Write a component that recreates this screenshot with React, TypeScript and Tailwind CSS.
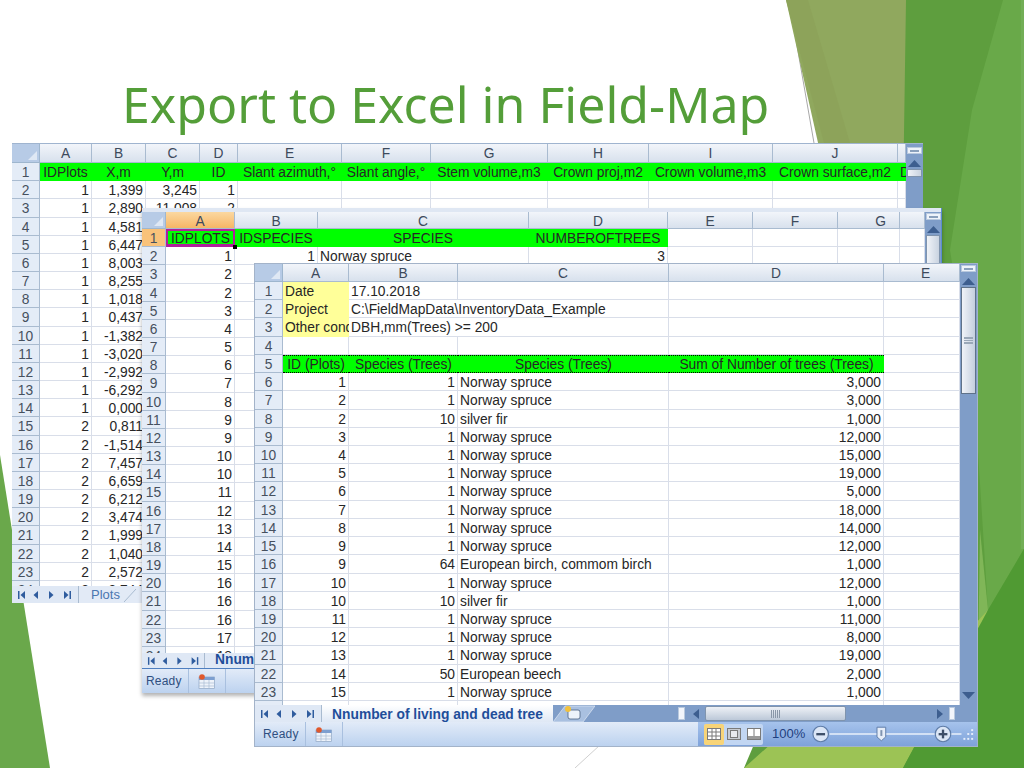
import React from "react";

type C = { t?: string; c?: string; own?: boolean };
const r = (t: string): C => ({ t, c: "text-right" });
const l = (t: string): C => ({ t, c: "text-left" });
const e: C = {};
const g = (t: string): C => ({ t, own: true, c: "text-center bg-[#00ff00] border-r border-b border-[#00ff00] text-[#0b3f0b]" });

const FONT = "font-['Liberation_Sans',Arial,sans-serif]";

function Sheet({
  gridClass,
  headers,
  rows,
  activeCol,
  activeRow,
  shiftCol,
  shiftClass,
}: {
  gridClass: string;
  headers: string[];
  rows: C[][];
  activeCol?: number;
  activeRow?: number;
  shiftCol?: number;
  shiftClass?: string;
}) {
  return (
    <div className={`min-h-0 min-w-0 flex-1 overflow-hidden bg-white text-[13.8px] leading-[19px] ${FONT} grid ${gridClass}`}>
      <div className="relative border-r border-b border-[#9eb6ce] bg-[#b7cbe6]">
        <svg className="absolute right-[2px] bottom-[2px]" width="9" height="9" viewBox="0 0 9 9">
          <polygon points="9,0 9,9 0,9" fill="#dfe8f4" />
        </svg>
      </div>
      {headers.map((h, i) => (
        <div
          key={i}
          className={`overflow-hidden border-r border-b border-[#a9bbd0] text-center text-[#3d4a5c] ${
            activeCol === i ? "bg-linear-to-b from-[#fbd8a0] to-[#f6b664]" : "bg-linear-to-b from-[#f2f5fa] to-[#d8e1ed]"
          } ${shiftCol === i ? shiftClass : ""}`}
        >
          {h}
        </div>
      ))}
      {rows.map((row, ri) => (
        <React.Fragment key={ri}>
          <div
            className={`overflow-hidden border-r border-b border-[#a9bbd0] text-center text-[#46505e] ${
              activeRow === ri ? "bg-[#f8c27a]" : "bg-[#e4ecf7]"
            }`}
          >
            {ri + 1}
          </div>
          {headers.map((_, ci) => {
            const cell = row[ci] ?? e;
            return (
              <div
                key={ci}
                className={`relative overflow-hidden px-[2px] whitespace-nowrap text-[#262626] ${
                  cell.own ? "" : "border-r border-b border-[#d9dee9]"
                } ${cell.c ?? ""}`}
              >
                {cell.t}
              </div>
            );
          })}
        </React.Fragment>
      ))}
    </div>
  );
}

function Tri({ up }: { up?: boolean }) {
  return (
    <svg width="13" height="7" viewBox="0 0 13 7" className="mx-auto block">
      <polygon points={up ? "6.5,0 13,7 0,7" : "0,0 13,0 6.5,7"} fill="#3d5e8f" />
    </svg>
  );
}

function Split() {
  return (
    <div className="mx-auto flex h-[7px] w-[15px] items-center justify-center border border-[#b9c9de] bg-[#eef3fa]">
      <div className="h-[2px] w-[9px] bg-[#8aa0bc]" />
    </div>
  );
}

function Nav({ w }: { w: string }) {
  return (
    <div className={`flex h-full shrink-0 items-center border-r border-[#a9bbd0] bg-[#dfe8f5] ${w}`}>
      <svg width="60" height="10" viewBox="0 0 60 10" className="ml-[5px]">
        <g fill="#2f5c9e">
          <rect x="1" y="1" width="1.5" height="8" />
          <polygon points="8,1 8,9 3.5,5" />
          <polygon points="21,1 21,9 16.5,5" />
          <polygon points="32,1 32,9 36.5,5" />
          <polygon points="47,1 47,9 51.5,5" />
          <rect x="52.5" y="1" width="1.5" height="8" />
        </g>
      </svg>
    </div>
  );
}

function SheetIcon() {
  return (
    <svg width="17" height="15" viewBox="0 0 17 15">
      <rect x="1" y="3" width="15.5" height="11.5" fill="#eef3fa" stroke="#8fa5c4" strokeWidth="0.7" />
      <rect x="1" y="3" width="15.5" height="3" fill="#7d9fd0" />
      <path d="M1 9h15M1 12h15M6 6v8M11 6v8" stroke="#a9bbd3" strokeWidth="0.7" />
      <circle cx="4" cy="3" r="2.8" fill="#e0582c" />
    </svg>
  );
}

function Status({ lead, children }: { lead: string; children?: React.ReactNode }) {
  return (
    <div className={`flex h-[24px] min-h-0 shrink-0 items-center bg-linear-to-b from-[#e2ebf8] to-[#bcd2ef] text-[12px] text-[#2f4f80] ${FONT}`}>
      <span className={`w-[42px] tracking-[0.2px] ${lead}`}>Ready</span>
      <div className="h-full w-px bg-[#a9c0df]" />
      <div className="flex h-full w-[36px] items-center justify-center pr-[2px]">
        <SheetIcon />
      </div>
      <div className="h-full w-px bg-[#a9c0df]" />
      {children}
    </div>
  );
}

function Window({ className, children }: { className: string; children: React.ReactNode }) {
  return <div className={`absolute flex flex-col ${className}`}>{children}</div>;
}

const w1Cols = ["A", "B", "C", "D", "E", "F", "G", "H", "I", "J", ""];
const w1a = "1 1 1 1 1 1 1 1 1 1 1 1 1 2 2 2 2 2 2 2 2 2 2".split(" ");
const w1b = "1,399 2,890 4,581 6,447 8,003 8,255 1,018 0,437 -1,382 -3,020 -2,992 -6,292 0,000 0,811 -1,514 7,457 6,659 6,212 3,474 1,999 1,040 2,572 8,744".split(" ");
const w1Rows: C[][] = [
  [
    g("IDPlots"),
    g("X,m"),
    g("Y,m"),
    g("ID"),
    g("Slant azimuth,°"),
    g("Slant angle,°"),
    g("Stem volume,m3"),
    g("Crown proj,m2"),
    g("Crown volume,m3"),
    g("Crown surface,m2"),
    { t: "D", own: true, c: "text-left bg-[#00ff00] text-[#0b3f0b]" },
  ],
  ...w1a.map((a, i) => {
    const row: C[] = [r(a), r(w1b[i])];
    if (i === 0) row.push(r("3,245"), r("1"));
    if (i === 1) row.push(r("11,008"), r("2"));
    return row;
  }),
];

const w2a = "1 2 2 3 4 5 6 7 8 9 9 10 10 11 12 13 14 15 16 16 16 17 18".split(" ");
const w2Rows: C[][] = [
  [
    { t: "IDPLOTS", own: true, c: "text-center bg-[#00ff00] text-[#0b3f0b] border-2 border-b-[3px] border-[#b0209c] leading-[15px]" },
    g("IDSPECIES"),
    g("SPECIES"),
    g("NUMBEROFTREES"),
  ],
  ...w2a.map((a, i) => {
    const row: C[] = [r(a)];
    if (i === 0) row.push(r("1"), l("Norway spruce"), r("3"));
    return row;
  }),
];

const gd = (t: string): C => ({
  t,
  own: true,
  c: "text-center bg-[#00ff00] text-[#0b3f0b] border-t border-b border-dotted border-black leading-[17px]",
});
const y = (t: string): C => ({ t, own: true, c: "text-left bg-[#ffff99] border-b border-[#ffff99] text-[#333]" });
const w3Data: [string, string, string, string][] = [
  ["1", "1", "Norway spruce", "3,000"],
  ["2", "1", "Norway spruce", "3,000"],
  ["2", "10", "silver fir", "1,000"],
  ["3", "1", "Norway spruce", "12,000"],
  ["4", "1", "Norway spruce", "15,000"],
  ["5", "1", "Norway spruce", "19,000"],
  ["6", "1", "Norway spruce", "5,000"],
  ["7", "1", "Norway spruce", "18,000"],
  ["8", "1", "Norway spruce", "14,000"],
  ["9", "1", "Norway spruce", "12,000"],
  ["9", "64", "European birch, commom birch", "1,000"],
  ["10", "1", "Norway spruce", "12,000"],
  ["10", "10", "silver fir", "1,000"],
  ["11", "1", "Norway spruce", "11,000"],
  ["12", "1", "Norway spruce", "8,000"],
  ["13", "1", "Norway spruce", "19,000"],
  ["14", "50", "European beech", "2,000"],
  ["15", "1", "Norway spruce", "1,000"],
  ["16", "1", "Norway spruce", "1,000"],
];
const w3Rows: C[][] = [
  [y("Date"), { t: "17.10.2018", c: "text-left" }],
  [y("Project"), { t: "C:\\FieldMapData\\InventoryData_Example", own: true, c: "text-left overflow-visible border-b border-[#d9dee9]" }],
  [y("Other conditions"), { t: "DBH,mm(Trees) >= 200", own: true, c: "text-left overflow-visible border-b border-[#d9dee9]" }],
  [],
  [gd("ID (Plots)"), gd("Species (Trees)"), gd("Species (Trees)"), gd("Sum of Number of trees (Trees)")],
  ...w3Data.map(([a, b, c, d]) => [r(a), r(b), l(c), r(d)]),
];

export default function App() {
  return (
    <div className="relative h-[768px] w-[1024px] overflow-hidden bg-white">
      <svg className="absolute inset-0" width="1024" height="768" viewBox="0 0 1024 768">
        <line x1="789" y1="0" x2="814" y2="143" stroke="#a8a8a8" strokeWidth="1" />
        <line x1="600" y1="745" x2="575" y2="768" stroke="#cfcfcf" strokeWidth="1" />
        <polygon points="0,455 50,768 0,768" fill="#6aa84b" />
        <polygon points="786,0 906,0 960,330 860,330" fill="#90a85e" />
        <polygon points="786,0 808,0 850,143 824,143" fill="#8da35a" />
        <polygon points="906,0 1024,0 1024,768 744,768 900,400" fill="#5e9e3e" />
        <polygon points="1003,0 1024,0 1024,549 988,610 976,420 950,250 972,110" fill="#69a949" />
        <polygon points="980,530 988,610 978,665" fill="#80b658" />
        <polygon points="744,768 820,700 960,640 988,610 903,768" fill="#9cc355" />
        <polygon points="1024,549 988,610 903,768 1024,768" fill="#509a33" />
        <rect x="1021" y="0" width="3" height="549" fill="#72ae56" />
      </svg>

      <h1 className="relative pt-[71px] pl-[122px] font-['Noto_Sans',sans-serif] text-[50px] leading-[66px] font-normal text-[#549e39]">
        Export to Excel in Field-Map
      </h1>

      {/* Plots sheet */}
      <Window className="top-[143px] left-[12px] h-[460px] w-[911px] border-t border-[#9fb4cf] bg-[#7f9dc8]">
        <div className="flex min-h-0 flex-1">
          <Sheet
            gridClass="grid-cols-[28px_52px_54px_54px_38px_104px_89px_117px_101px_124px_125px_8px] grid-rows-[19px] auto-rows-[18.18px]"
            headers={w1Cols}
            rows={w1Rows}
          />
          <div className="w-[17px] shrink-0 bg-[#7f9dc8] pt-[3px]">
            <Split />
            <div className="mt-[6px]">
              <Tri up />
            </div>
            <div className="mx-auto mt-[2px] h-[8px] w-[15px] border border-[#8094ad] bg-linear-to-r from-[#f0f3f8] to-[#c9d3e0]" />
          </div>
        </div>
        <div className={`flex h-[17px] shrink-0 items-center bg-[#e2eaf6] text-[13px] ${FONT}`}>
          <Nav w="w-[67px]" />
          <span className="ml-[12px] w-[33px] text-[#4a76b0]">Plots</span>
          <svg width="18" height="17" viewBox="0 0 18 17">
            <path d="M0 16L12 3" stroke="#a9bbd0" fill="none" />
          </svg>
        </div>
      </Window>

      {/* Species sheet */}
      <Window className="top-[208px] left-[142px] h-[485px] w-[800px] border-r border-[#5a8bd0] bg-[#7f9dc8] shadow-[0_3px_4px_rgba(0,0,0,0.3)]">
        <div className="h-[4px] shrink-0 bg-[#dfe7f3]" />
        <div className="flex min-h-0 flex-1">
          <Sheet
            gridClass="grid-cols-[24px_69px_83px_211px_139px_85px_85px_62px_25px] grid-rows-[17px] auto-rows-[18.18px]"
            headers={["A", "B", "C", "D", "E", "F", "G", ""]}
            rows={w2Rows}
            activeCol={0}
            activeRow={0}
            shiftCol={6}
            shiftClass="pl-[24px]"
          />
          <div className="w-[16px] shrink-0 bg-[#7f9dc8] pt-[1px]">
            <Split />
            <div className="mt-[6px]">
              <Tri up />
            </div>
            <div className="mx-auto mt-[2px] h-[52px] w-[14px] border border-[#8094ad] bg-linear-to-r from-[#f0f3f8] to-[#c9d3e0]" />
          </div>
        </div>
        <div className={`flex h-[16px] shrink-0 items-center border-b border-[#4f7fc0] bg-[#dfe8f5] text-[13.8px] ${FONT}`}>
          <Nav w="w-[63px]" />
          <span className="ml-[10px] font-bold text-[#1f4e9a]">Nnum</span>
        </div>
        <Status lead="ml-[4px]" />
        <div className="absolute top-[37px] left-[91px] h-[4px] w-[4px] bg-black" />
      </Window>

      {/* Number of trees sheet */}
      <Window className="top-[263px] left-[254px] h-[484px] w-[724px] border border-[#a3b3c9] bg-[#7f9dc8]">
        <div className="flex min-h-0 flex-1">
          <Sheet
            gridClass="grid-cols-[28px_66px_109px_211px_215px_76px] grid-rows-[18px] auto-rows-[18.23px]"
            headers={["A", "B", "C", "D", "E"]}
            rows={w3Rows}
            shiftCol={4}
            shiftClass="pl-[8px]"
          />
          <div className="flex w-[17px] shrink-0 flex-col bg-[#7f9dc8] pt-[1px]">
            <Split />
            <div className="mt-[6px]">
              <Tri up />
            </div>
            <div className="relative mx-auto mt-[2px] flex h-[107px] w-[15px] items-center justify-center border border-[#5f7289] bg-linear-to-r from-[#f0f3f8] to-[#c4cfde]">
              <div className="h-[7px] w-[9px] border-y border-[#9aa8b8] bg-[repeating-linear-gradient(0deg,#9aa8b8_0,#9aa8b8_1px,transparent_1px,transparent_2px)]" />
            </div>
            <div className="flex-1" />
            <div className="mb-[6px]">
              <Tri />
            </div>
          </div>
        </div>
        <div className={`flex h-[17px] shrink-0 items-center bg-[#7f9dc8] text-[13.8px] ${FONT}`}>
          <Nav w="w-[67px]" />
          <div className="flex h-full w-[231px] items-center justify-center bg-linear-to-b from-white to-[#dfe8f5] pt-[3px] font-bold text-[#1f4e9a]">
            Nnumber of living and dead tree
          </div>
          <svg width="42" height="17" viewBox="0 0 42 17" className="shrink-0">
            <polygon points="0,17 12,1 42,1 30,17" fill="#a9c0e0" stroke="#dfe8f5" strokeWidth="0.7" />
            <rect x="15" y="5" width="12" height="9" rx="2" fill="#eef3fa" stroke="#4a5f80" strokeWidth="0.8" />
            <circle cx="15" cy="4" r="3" fill="#f2c13c" />
          </svg>
          <div className="ml-[83px] h-[13px] w-[7px] border border-[#b9c9de] bg-[#f2f5fb]" />
          <svg width="8" height="10" viewBox="0 0 8 10" className="ml-[7px]">
            <polygon points="7,0 7,10 1,5" fill="#3d5e8f" />
          </svg>
          <div className="ml-[5px] flex h-[15px] w-[141px] items-center justify-center rounded-[2px] border border-[#8094ad] bg-linear-to-b from-[#eef1f6] to-[#bcc8d8]">
            <div className="h-[8px] w-[9px] bg-[repeating-linear-gradient(90deg,#8a97a8_0,#8a97a8_1px,transparent_1px,transparent_2px)]" />
          </div>
          <svg width="8" height="10" viewBox="0 0 8 10" className="ml-[90px]">
            <polygon points="1,0 1,10 7,5" fill="#3d5e8f" />
          </svg>
          <div className="ml-[5px] h-[13px] w-[6px] border border-[#b9c9de] bg-[#f2f5fb]" />
        </div>
        <Status lead="ml-[8px]">
          <div className="flex-1" />
          <div className="flex h-full w-[279px] items-center bg-linear-to-b from-[#a6c3ec] to-[#7ea2da]">
            <div className="ml-[6px] flex h-[21px] w-[59px] rounded-[2px] bg-[#c2d6f2]">
              <div className="flex w-[20px] items-center justify-center rounded-[2px] bg-[#f8d478]">
                <svg width="14" height="12" viewBox="0 0 14 12">
                  <rect x="0.5" y="0.5" width="13" height="11" fill="#fff" stroke="#7a7a7a" />
                  <path d="M0 4h14M0 8h14M5 0v12M9 0v12" stroke="#7a7a7a" />
                </svg>
              </div>
              <div className="flex w-[20px] items-center justify-center">
                <svg width="14" height="12" viewBox="0 0 14 12">
                  <rect x="0.5" y="0.5" width="13" height="11" fill="#c8ccd2" stroke="#7a7a7a" />
                  <rect x="3.5" y="2.5" width="7" height="7" fill="#e8eaee" stroke="#7a7a7a" />
                </svg>
              </div>
              <div className="flex w-[19px] items-center justify-center">
                <svg width="14" height="12" viewBox="0 0 14 12">
                  <rect x="0.5" y="0.5" width="13" height="11" fill="#fff" stroke="#7a7a7a" />
                  <rect x="1" y="8" width="12" height="3" fill="#9a9a9a" />
                  <path d="M7 0v8" stroke="#7a7a7a" />
                </svg>
              </div>
            </div>
            <span className="ml-[9px] w-[32px] text-[13px] text-[#1f3f7f]">100%</span>
            <svg width="172" height="22" viewBox="0 0 172 22" className="ml-[6px]">
              <line x1="20" y1="11" x2="156" y2="11" stroke="#e8f0fb" strokeWidth="1.5" />
              <circle cx="11" cy="11" r="8" fill="#dbe6f6" stroke="#5f7da8" strokeWidth="1.2" />
              <rect x="6.5" y="10" width="9" height="2.4" fill="#3d4e68" />
              <polygon points="69,4 78,4 78,14 73.5,18 69,14" fill="#e6edf8" stroke="#5f7da8" />
              <rect x="72.5" y="7" width="2" height="6" fill="#7f93b0" />
              <circle cx="137" cy="11" r="8" fill="#dbe6f6" stroke="#5f7da8" strokeWidth="1.2" />
              <rect x="132.5" y="10" width="9" height="2.4" fill="#3d4e68" />
              <rect x="135.8" y="6.5" width="2.4" height="9" fill="#3d4e68" />
              <g fill="#e6eefa">
                <rect x="166" y="6" width="2" height="2" />
                <rect x="162" y="10" width="2" height="2" />
                <rect x="166" y="10" width="2" height="2" />
                <rect x="158" y="15" width="2" height="2" />
                <rect x="162" y="15" width="2" height="2" />
                <rect x="166" y="15" width="2" height="2" />
              </g>
            </svg>
          </div>
        </Status>
      </Window>
    </div>
  );
}
